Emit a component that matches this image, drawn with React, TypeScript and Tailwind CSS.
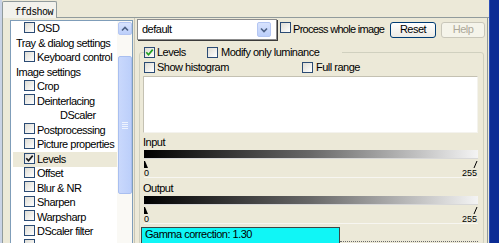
import React from "react";

const F = "font-['Liberation_Sans',Arial,sans-serif] text-[11px] tracking-[-0.5px] text-black";

function Check({ checked = false, green = false }: { checked?: boolean; green?: boolean }) {
  return (
    <span className="inline-flex w-[11px] h-[11px] shrink-0 items-center justify-center border border-[#2B4B74] bg-[linear-gradient(135deg,#dedcd4,#ffffff)]">
      {checked && (
        <svg width="9" height="9" viewBox="0 0 9 9">
          <path d="M1.3 4.3 L3.5 6.8 L7.7 1.6" fill="none" stroke={green ? "#21a121" : "#1a1a1a"} strokeWidth="1.7" />
        </svg>
      )}
    </span>
  );
}

type Row = { kind: "cb" | "hdr" | "sub"; label: string; checked?: boolean; sel?: boolean };

const rows: Row[] = [
  { kind: "cb", label: "OSD" },
  { kind: "hdr", label: "Tray & dialog settings" },
  { kind: "cb", label: "Keyboard control" },
  { kind: "hdr", label: "Image settings" },
  { kind: "cb", label: "Crop" },
  { kind: "cb", label: "Deinterlacing" },
  { kind: "sub", label: "DScaler" },
  { kind: "cb", label: "Postprocessing" },
  { kind: "cb", label: "Picture properties" },
  { kind: "cb", label: "Levels", checked: true, sel: true },
  { kind: "cb", label: "Offset" },
  { kind: "cb", label: "Blur & NR" },
  { kind: "cb", label: "Sharpen" },
  { kind: "cb", label: "Warpsharp" },
  { kind: "cb", label: "DScaler filter" },
  { kind: "cb", label: "" },
];

function TreeRow({ r }: { r: Row }) {
  return (
    <div className={`h-[14.5px] shrink-0 ml-[2px] flex items-center whitespace-nowrap ${r.sel ? "bg-[#ECE9D8]" : ""}`}>
      {r.kind === "cb" && (
        <>
          <span className="ml-[11px]">
            <Check checked={r.checked} />
          </span>
          {r.label && <span className="ml-[2px] leading-[13px]">{r.label}</span>}
        </>
      )}
      {r.kind === "hdr" && <span className="ml-[3px] leading-[13px]">{r.label}</span>}
      {r.kind === "sub" && <span className="ml-[47px] leading-[13px]">{r.label}</span>}
    </div>
  );
}

function Scrollbar() {
  return (
    <div className="w-[15px] shrink-0 bg-[#FAF9F5] flex flex-col items-center">
      <div className="mt-[1px] w-[14px] h-[13px] rounded-[2px] border border-[#B4C6F2] bg-[linear-gradient(#d8e3fd,#bccffa)] flex items-center justify-center">
        <svg width="8" height="6" viewBox="0 0 8 6">
          <path d="M1 4.5 L4 1.5 L7 4.5" fill="none" stroke="#4D6185" strokeWidth="1.6" />
        </svg>
      </div>
      <div className="mt-[21px] w-[14px] h-[138px] rounded-[2px] border border-[#A9BFF0] bg-[linear-gradient(to_right,#c9d8fc,#bccffa)] flex flex-col items-center justify-center gap-[1px]">
        <div className="w-[6px] h-[1px] bg-[#EEF3FE]" />
        <div className="w-[6px] h-[1px] bg-[#EEF3FE]" />
        <div className="w-[6px] h-[1px] bg-[#EEF3FE]" />
        <div className="w-[6px] h-[1px] bg-[#EEF3FE]" />
      </div>
    </div>
  );
}

function Marker() {
  return (
    <svg width="334" height="7" viewBox="0 0 334 7" className="block">
      <polygon points="0,0 1,0 4,7 0,7" fill="#000" />
      <line x1="333" y1="0" x2="330" y2="7" stroke="#000" strokeWidth="1" />
    </svg>
  );
}

function Scale({ label }: { label: string }) {
  return (
    <div className="flex flex-col">
      <div className="-ml-[1px] leading-[13px]">{label}</div>
      <div className="mt-[1px] w-[334px] h-[9px] bg-[linear-gradient(to_right,#000000,#686868_50%,#f4f4f4)] border-b border-[#d8d8d8]" />
      <div className="mt-[2px] h-[7px]">
        <Marker />
      </div>
      <div className="w-[334px] h-[10px] flex justify-between text-[9px] tracking-normal leading-[10px] pr-[1px] border-b border-[#F7F6F1]">
        <span>0</span>
        <span>255</span>
      </div>
    </div>
  );
}

export default function App() {
  return (
    <div className={`${F} w-[499px] h-[243px] overflow-hidden bg-[#ECE9D8] flex`}>
      <div className="w-[489px] shrink-0 flex flex-col border-l-2 border-[#C9D3E6]">
        {/* tab strip */}
        <div className="h-[18px] shrink-0 flex">
          <div className="mt-[1px] w-[55px] h-[17px] border-t border-l border-r border-[#919B9C] rounded-t-[2px] bg-[#F3F2EC] pl-[12px] pt-[1px]">
            <span className="font-['Liberation_Mono',monospace] text-[10px] tracking-[-0.6px] leading-[12px]">ffdshow</span>
          </div>
          <div className="flex-1 border-b border-[#919B9C]" />
        </div>
        {/* body */}
        <div className="w-[486px] flex-1 min-h-0 overflow-hidden flex border-l border-r border-[#919B9C] pl-[7px] pt-[2px]">
          {/* tree */}
          <div className="w-[123px] h-[235px] shrink-0 border border-[#7F9DB9] bg-white flex">
            <div className="flex-1 flex flex-col pt-[0.5px] overflow-hidden">
              {rows.map((r, i) => (
                <TreeRow key={i} r={r} />
              ))}
            </div>
            <Scrollbar />
          </div>
          {/* right panel */}
          <div className="ml-[1px] flex-1 -mt-[2px] border-l border-[#C9C6B6] flex flex-col overflow-hidden">
            <div className="mt-[1px] h-[21px] shrink-0 flex items-center">
              <div className="ml-[2px] w-[140px] h-[21px] bg-white border border-[#8C8C8C] shadow-[1px_1px_0_#3a3a3a] flex items-center">
                <span className="pl-[4px] leading-[13px]">default</span>
                <div className="ml-auto mr-[5px] w-[14px] h-[15px] rounded-[2px] border border-[#B4C6F2] bg-[linear-gradient(#d8e3fd,#bccffa)] flex items-center justify-center">
                  <svg width="8" height="6" viewBox="0 0 8 6">
                    <path d="M1 1.5 L4 4.5 L7 1.5" fill="none" stroke="#4D6185" strokeWidth="1.6" />
                  </svg>
                </div>
              </div>
              <span className="ml-[3px]">
                <Check />
              </span>
              <span className="ml-[2px] leading-[13px] whitespace-nowrap tracking-[-0.7px]">Process whole image</span>
              <div className="ml-auto w-[46px] h-[16px] rounded-[3px] border border-[#003C74] bg-[linear-gradient(#ffffff,#ecebe5)] flex items-center justify-center leading-[13px]">
                Reset
              </div>
              <div className="ml-[5px] mr-[2px] w-[44px] h-[16px] rounded-[3px] border border-[#C9C7BA] bg-[#F5F4EA] text-[#ACA899] flex items-center justify-center leading-[13px]">
                Help
              </div>
            </div>
            <fieldset className="mt-[6px] ml-[4px] w-[345px] shrink-0 border border-[#D0D0BF] rounded-[3px] px-[4px] flex flex-col">
              <legend className="h-[12px] w-[198px] flex items-center">
                <div className="w-[63px] flex items-center">
                  <Check checked green />
                  <span className="ml-[2px] leading-[13px]">Levels</span>
                </div>
                <Check />
                <span className="ml-[3px] leading-[13px] whitespace-nowrap">Modify only luminance</span>
              </legend>
              <div className="mt-[4px] h-[11px] flex items-center">
                <div className="w-[158px] flex items-center">
                  <Check />
                  <span className="ml-[2px] leading-[13px]">Show histogram</span>
                </div>
                <Check />
                <span className="ml-[3px] leading-[13px]">Full range</span>
              </div>
              <div className="mt-[3px] -ml-[1px] w-[335px] h-[57px] bg-white border-t border-l border-[#C4C1B2] border-r border-b border-r-[#F4F3EE] border-b-[#F4F3EE]" />
              <div className="mt-[3px]">
                <Scale label="Input" />
              </div>
              <div className="mt-[4px]">
                <Scale label="Output" />
              </div>
              <div className="mt-[3px] -ml-[3px] flex items-start">
                <div className="w-[199px] h-[17px] bg-[#10F6F6] border border-[#3C4646] pl-[3px] leading-[13px] whitespace-nowrap">
                  Gamma correction: 1.30
                </div>
                <div className="w-[138px] h-[15px] border-b border-dotted border-[#6A6A6A]" />
              </div>
            </fieldset>
          </div>
        </div>
      </div>
      <div className="w-[10px] shrink-0 bg-[#0C2C94] border-l border-[#2A4DB8]" />
    </div>
  );
}
